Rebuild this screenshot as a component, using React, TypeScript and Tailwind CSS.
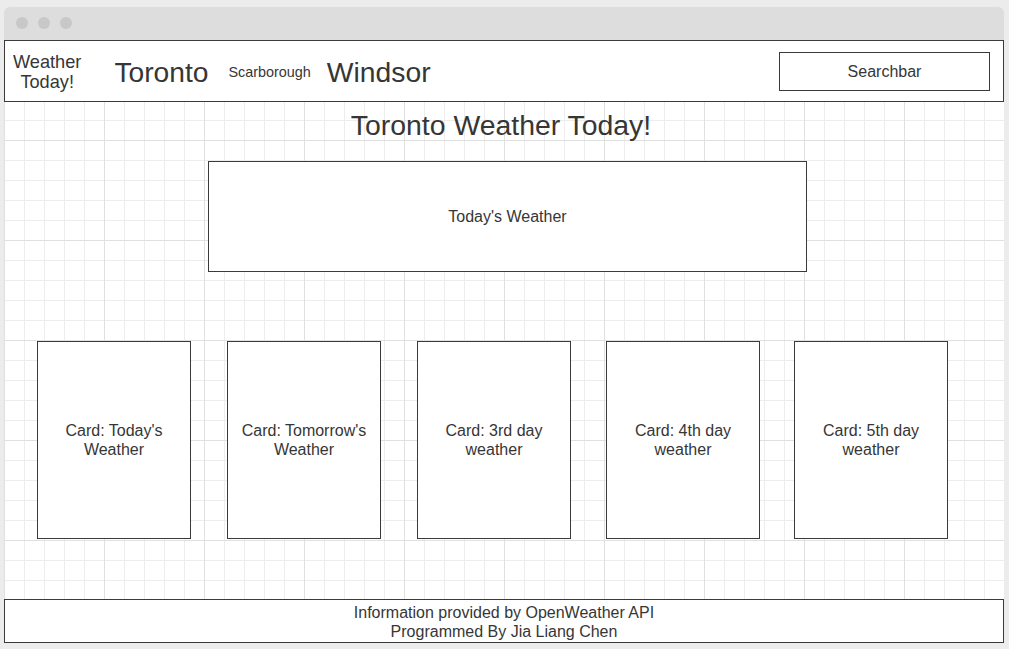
import React from "react";

const cards = [
  { label: "Card: Today's Weather", ml: "ml-[33px]" },
  { label: "Card: Tomorrow's Weather", ml: "ml-[36px]" },
  { label: "Card: 3rd day weather", ml: "ml-[36px]" },
  { label: "Card: 4th day weather", ml: "ml-[35px]" },
  { label: "Card: 5th day weather", ml: "ml-[34px]" },
];

export default function App() {
  return (
    <div className="w-[1009px] h-[649px] bg-[#ececec] pt-[7px] pl-[4px] overflow-hidden font-['Liberation_Sans',Arial,sans-serif] text-[#363636]">
      <div className="w-[1000px] flex flex-col">
        {/* title bar */}
        <div className="h-[33px] bg-[#dddddd] rounded-t-[6px] flex items-start pt-[10px] pl-[12px] gap-[10px]">
          <div className="w-[12px] h-[12px] rounded-full bg-[#c8c8c8]" />
          <div className="w-[12px] h-[12px] rounded-full bg-[#c8c8c8]" />
          <div className="w-[12px] h-[12px] rounded-full bg-[#c8c8c8]" />
        </div>
        {/* body with grid */}
        <div className="flex flex-col bg-white bg-[linear-gradient(to_right,#e0e0e0_1px,transparent_1px),linear-gradient(to_bottom,#e0e0e0_1px,transparent_1px),linear-gradient(to_right,#ededed_1px,transparent_1px),linear-gradient(to_bottom,#ededed_1px,transparent_1px)] bg-[size:100px_100px,100px_100px,20px_20px,20px_20px]">
          {/* nav */}
          <div className="h-[62px] border border-[#3a3a3a] bg-white flex items-center pt-[1px]">
            <div className="ml-[8px] text-[18.2px] leading-[20px] text-center pt-[1px]">
              Weather
              <br />
              Today!
            </div>
            <div className="ml-[33px] text-[28.2px] leading-[32px]">Toronto</div>
            <div className="ml-[20px] text-[14.4px] leading-[16px]">Scarborough</div>
            <div className="ml-[16px] text-[28.3px] leading-[32px]">Windsor</div>
            <div className="ml-auto mr-[13px] w-[211px] h-[39px] border border-[#3a3a3a] flex items-center justify-center text-[16px] -mt-[1px] pt-[2px]">
              Searchbar
            </div>
          </div>
          {/* main */}
          <div className="h-[497px] flex flex-col">
            <div className="pt-[7px] h-[40px] text-center text-[28.4px] leading-[32px] pr-[6px]">
              Toronto Weather Today!
            </div>
            <div className="mt-[19px] ml-[204px] w-[599px] h-[111px] border border-[#3a3a3a] bg-white flex items-center justify-center text-[16px] leading-[19px]">
              Today's Weather
            </div>
            <div className="mt-[69px] flex">
              {cards.map((c) => (
                <div
                  key={c.label}
                  className={`${c.ml} w-[154px] h-[198px] border border-[#3a3a3a] bg-white flex items-center justify-center text-center text-[16px] leading-[19px] px-[4px]`}
                >
                  {c.label}
                </div>
              ))}
            </div>
          </div>
          {/* footer */}
          <div className="h-[44px] border border-[#3a3a3a] bg-white flex flex-col items-center justify-center text-[16px] leading-[19px] pt-[2px]">
            <div>Information provided by OpenWeather API</div>
            <div>Programmed By Jia Liang Chen</div>
          </div>
        </div>
      </div>
    </div>
  );
}
